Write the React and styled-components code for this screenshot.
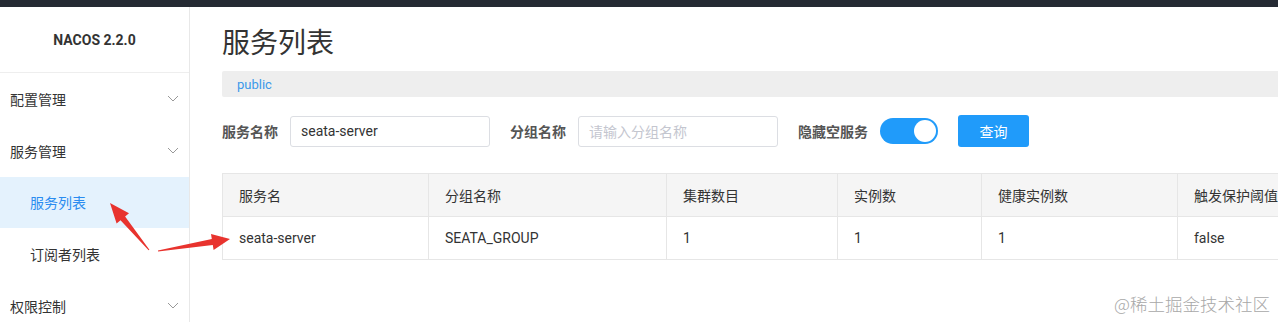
import React from "react";
import styled, { createGlobalStyle } from "styled-components";

const GlobalStyle = createGlobalStyle`
  body {
    margin: 0;
    background: #fff;
    font-family: Roboto, "Noto Sans CJK SC", sans-serif;
    color: #333;
  }
`;

const Page = styled.div`
  position: relative;
  width: 1278px;
  height: 322px;
  overflow: hidden;
`;

const TopBar = styled.div`
  height: 7px;
  background: #252a33;
`;

const Body = styled.div`
  display: flex;
  height: 315px;
`;

const Sidebar = styled.aside`
  width: 189px;
  flex-shrink: 0;
  border-right: 1px solid #e8e8e8;
`;

const Brand = styled.div`
  height: 65px;
  display: flex;
  align-items: center;
  justify-content: center;
  border-bottom: 1px solid #eee;
  font-weight: bold;
  font-size: 14px;
  color: #333;
`;

const MenuItem = styled.div`
  height: 51.75px;
  display: flex;
  align-items: center;
  justify-content: space-between;
  padding: 0 10px 0 ${(p) => (p.$sub ? "30px" : "10px")};
  font-size: 14px;
  color: ${(p) => (p.$active ? "#2a8cf0" : "#333")};
  background: ${(p) => (p.$active ? "#e4f2fd" : "transparent")};
`;

const Main = styled.main`
  flex: 1;
  min-width: 0;
  padding-left: 32px;
  overflow: hidden;
`;

const Title = styled.h1`
  margin: 19px 0 9px;
  font-size: 28px;
  line-height: 36px;
  font-weight: normal;
  color: #333;
`;

const Namespace = styled.div`
  height: 26px;
  display: flex;
  align-items: center;
  padding-left: 15px;
  background: #eee;
  border-radius: 2px 0 0 2px;
  font-size: 13px;
  color: #3b99ea;
`;

const SearchRow = styled.div`
  display: flex;
  align-items: center;
  margin-top: 18px;
  height: 32px;
`;

const Label = styled.span`
  font-size: 14px;
  font-weight: bold;
  color: #555;
  margin-right: 12px;
  margin-left: ${(p) => p.$gap || 0}px;
`;

const Input = styled.div`
  box-sizing: border-box;
  width: 200px;
  height: 31px;
  border: 1px solid #dcdee3;
  border-radius: 3px;
  display: flex;
  align-items: center;
  padding-left: 10px;
  font-size: 14px;
  color: ${(p) => (p.$placeholder ? "#c4c6cf" : "#333")};
`;

const Switch = styled.div`
  box-sizing: border-box;
  width: 58px;
  height: 26px;
  border-radius: 13px;
  background: #209bfa;
  display: flex;
  align-items: center;
  justify-content: flex-end;
  padding-right: 2px;
  &::after {
    content: "";
    width: 22px;
    height: 22px;
    border-radius: 50%;
    background: #fff;
  }
`;

const Button = styled.button`
  margin-left: 20px;
  width: 71px;
  height: 32px;
  border: none;
  border-radius: 3px;
  background: #209bfa;
  color: #fff;
  font-size: 14px;
  font-family: inherit;
`;

const Table = styled.div`
  margin-top: 26px;
  width: 1160px;
  border-top: 1px solid #e6e6e6;
  border-left: 1px solid #e6e6e6;
`;

const Row = styled.div`
  display: grid;
  grid-template-columns: 206px 238px 171px 144px 196px 205px;
  height: 42px;
  background: ${(p) => (p.$head ? "#f5f5f5" : "#fff")};
  border-bottom: 1px solid #e6e6e6;
`;

const Cell = styled.div`
  display: flex;
  align-items: center;
  padding-left: 16px;
  border-right: 1px solid #e6e6e6;
  font-size: 14px;
  color: #333;
  white-space: nowrap;
`;

const Watermark = styled.div`
  position: absolute;
  right: 8px;
  bottom: 6px;
  font-size: 17.5px;
  color: #a8a8a8;
  font-family: "Noto Sans CJK SC", sans-serif;
  font-weight: 300;
`;

const Overlay = styled.svg`
  position: absolute;
  left: 0;
  top: 0;
  pointer-events: none;
`;

const Chevron = () => (
  <svg width="12" height="7" viewBox="0 0 12 7">
    <path d="M1 1 L6 6 L11 1" fill="none" stroke="#999" strokeWidth="1" />
  </svg>
);

const menu = [
  { label: "配置管理", chevron: true },
  { label: "服务管理", chevron: true },
  { label: "服务列表", sub: true, active: true },
  { label: "订阅者列表", sub: true },
  { label: "权限控制", chevron: true },
];

const headers = ["服务名", "分组名称", "集群数目", "实例数", "健康实例数", "触发保护阈值"];
const data = ["seata-server", "SEATA_GROUP", "1", "1", "1", "false"];

export default function App() {
  return (
    <Page>
      <GlobalStyle />
      <TopBar />
      <Body>
        <Sidebar>
          <Brand>NACOS 2.2.0</Brand>
          {menu.map((m) => (
            <MenuItem key={m.label} $sub={m.sub} $active={m.active}>
              <span>{m.label}</span>
              {m.chevron && <Chevron />}
            </MenuItem>
          ))}
        </Sidebar>
        <Main>
          <Title>服务列表</Title>
          <Namespace>public</Namespace>
          <SearchRow>
            <Label>服务名称</Label>
            <Input>seata-server</Input>
            <Label $gap={20}>分组名称</Label>
            <Input $placeholder>请输入分组名称</Input>
            <Label $gap={20}>隐藏空服务</Label>
            <Switch />
            <Button>查询</Button>
          </SearchRow>
          <Table>
            <Row $head>
              {headers.map((h) => (
                <Cell key={h}>{h}</Cell>
              ))}
            </Row>
            <Row>
              {data.map((d, i) => (
                <Cell key={i}>{d}</Cell>
              ))}
            </Row>
          </Table>
        </Main>
      </Body>
      <Overlay width="1278" height="322">
        <polygon
          fill="#e8332e"
          points="110,203 129,213.3 125.1,216.5 149.4,249.7 148.6,250.3 120.5,220.3 116.6,223.5"
        />
        <polygon
          fill="#e8332e"
          points="230,239 211,234.1 211.8,239 157.9,250.5 158.1,251.5 212.8,245 213.6,249.9"
        />
      </Overlay>
      <Watermark>@稀土掘金技术社区</Watermark>
    </Page>
  );
}
